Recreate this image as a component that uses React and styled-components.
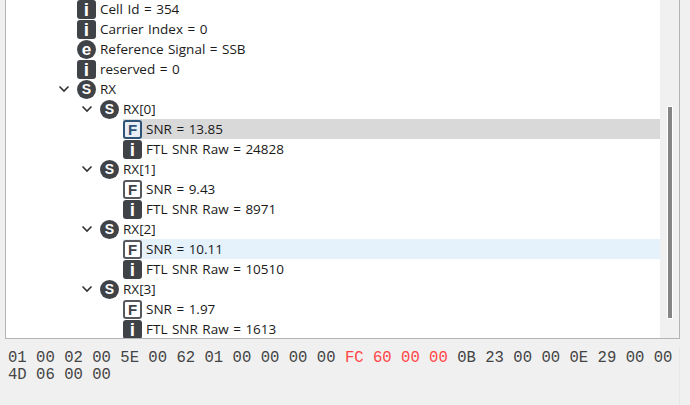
import React from 'react'
import styled, { createGlobalStyle } from 'styled-components'

const Global = createGlobalStyle`
  html, body { margin: 0; padding: 0; background: #f0f0f0; overflow: hidden; }
`

const Page = styled.div`
  width: 690px;
  height: 405px;
  padding-left: 5px;
  padding-right: 10px;
  box-sizing: border-box;
  display: flex;
  flex-direction: column;
  font-family: "Open Sans", "Noto Sans", sans-serif;
`

const TreePanel = styled.div`
  height: 339px;
  flex: none;
  display: flex;
  background: #fff;
  border: 1px solid #b4b4b4;
  border-top: none;
  box-sizing: border-box;
`

const Tree = styled.div`
  flex: 1;
  overflow: hidden;
  margin-top: -1px;
`

const Row = styled.div`
  height: 20px;
  display: flex;
  align-items: center;
  padding-left: ${p => p.$depth * 23 + 48}px;
`

const Chevron = styled.svg`
  width: 12px;
  height: 12px;
  margin-left: -19px;
  margin-right: 7px;
  flex: none;
`

const sizes = { i: 19, e: 17, S: 14 }

const Badge = styled.span`
  width: 19px;
  height: 19px;
  flex: none;
  box-sizing: border-box;
  display: flex;
  align-items: center;
  justify-content: center;
  font-family: "Liberation Sans", sans-serif;
  font-weight: 700;
  font-size: ${p => sizes[p.$kind]}px;
  line-height: 1;
  color: #fff;
  background: #3f4347;
  border-radius: ${p => (p.$kind === 'i' ? '3px' : '50%')};
`

const FloatBadge = styled(Badge)`
  background: ${p => (p.$selected ? '#e8eef4' : '#fff')};
  color: ${p => (p.$selected ? '#2f5277' : '#3f4347')};
  border: 2px solid ${p => (p.$selected ? '#2f5277' : '#55585c')};
  border-radius: 3px;
  font-size: 15px;
`

const Label = styled.span`
  flex: 1;
  height: 20px;
  line-height: 20px;
  margin-left: 4px;
  font-size: 13.5px;
  word-spacing: 1px;
  color: #1a1a1a;
  white-space: nowrap;
`

const Content = styled.div`
  flex: 1;
  display: flex;
  align-items: center;
  height: 20px;
  background: ${p => (p.$selected ? '#d9d9d9' : p.$hover ? '#e5f1fb' : 'transparent')};
`

const ScrollTrack = styled.div`
  width: 19px;
  flex: none;
  background: #f0f0f0;
  display: flex;
  justify-content: center;
  padding-top: 107px;
  padding-bottom: 20px;
  box-sizing: border-box;
`

const ScrollThumb = styled.div`
  width: 4px;
  height: 211px;
  background: #858585;
  box-shadow: 0 0 0 1px #fff;
`

const HexPanel = styled.div`
  flex: 1;
  margin-top: 8px;
  padding: 3px 3px 0 3px;
  border-right: 1px solid #e6e6e6;
  font-family: "Liberation Mono", monospace;
  font-size: 15.6px;
  line-height: 17px;
  font-weight: 400;
  color: #444;
`

const HexLine = styled.div`
  white-space: pre;
`

const Red = styled.span`
  color: #ff4545;
`

const rows = [
  { depth: 1, kind: 'i', text: 'Cell Id = 354' },
  { depth: 1, kind: 'i', text: 'Carrier Index = 0' },
  { depth: 1, kind: 'e', text: 'Reference Signal = SSB' },
  { depth: 1, kind: 'i', text: 'reserved = 0' },
  { depth: 1, kind: 'S', text: 'RX', open: true },
  { depth: 2, kind: 'S', text: 'RX[0]', open: true },
  { depth: 3, kind: 'F', text: 'SNR = 13.85', selected: true },
  { depth: 3, kind: 'i', text: 'FTL SNR Raw = 24828' },
  { depth: 2, kind: 'S', text: 'RX[1]', open: true },
  { depth: 3, kind: 'F', text: 'SNR = 9.43' },
  { depth: 3, kind: 'i', text: 'FTL SNR Raw = 8971' },
  { depth: 2, kind: 'S', text: 'RX[2]', open: true },
  { depth: 3, kind: 'F', text: 'SNR = 10.11', hover: true },
  { depth: 3, kind: 'i', text: 'FTL SNR Raw = 10510' },
  { depth: 2, kind: 'S', text: 'RX[3]', open: true },
  { depth: 3, kind: 'F', text: 'SNR = 1.97' },
  { depth: 3, kind: 'i', text: 'FTL SNR Raw = 1613' },
]

export default function App() {
  return (
    <Page>
      <Global />
      <TreePanel>
        <Tree>
          {rows.map((r, i) => (
            <Row key={i} $depth={r.depth}>
              {r.open && (
                <Chevron viewBox="0 0 12 12">
                  <path d="M1.5 3.5 L6 8 L10.5 3.5" fill="none" stroke="#333" strokeWidth="1.6" />
                </Chevron>
              )}
              <Content $selected={r.selected} $hover={r.hover}>
                {r.kind === 'F'
                  ? <FloatBadge $kind="F" $selected={r.selected}>F</FloatBadge>
                  : <Badge $kind={r.kind}>{r.kind}</Badge>}
                <Label>{r.text}</Label>
              </Content>
            </Row>
          ))}
        </Tree>
        <ScrollTrack>
          <ScrollThumb />
        </ScrollTrack>
      </TreePanel>
      <HexPanel>
        <HexLine>01 00 02 00 5E 00 62 01 00 00 00 00 <Red>FC 60 00 00</Red> 0B 23 00 00 0E 29 00 00</HexLine>
        <HexLine>4D 06 00 00</HexLine>
      </HexPanel>
    </Page>
  )
}
